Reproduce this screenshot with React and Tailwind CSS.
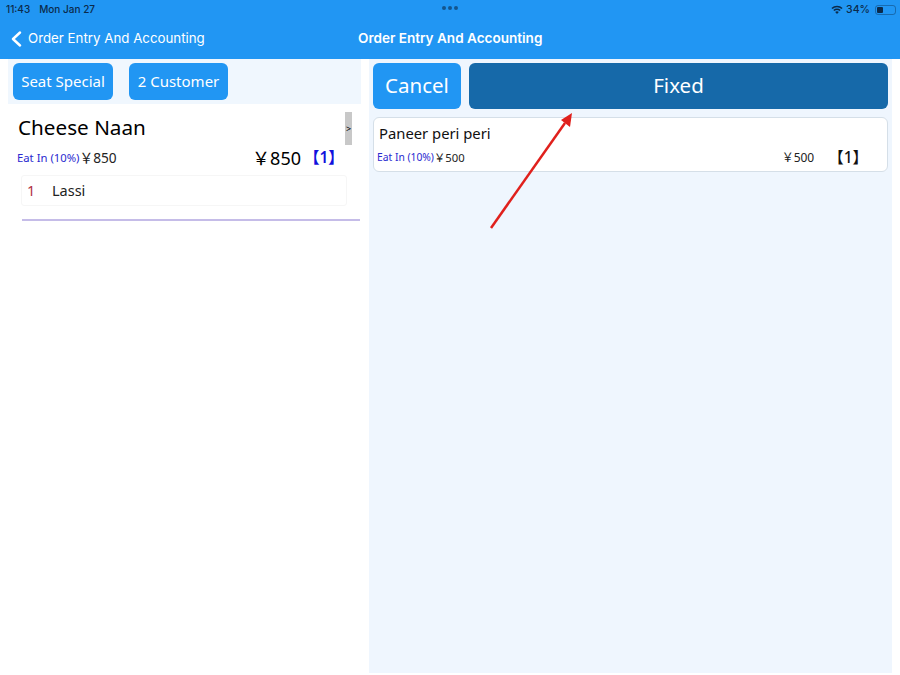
const cjk = "font-['Noto_Sans','Noto_Sans_CJK_JP',sans-serif]";

const Header = () => (
  <header className="relative h-[59px] shrink-0 bg-[#2196f3] font-['Inter',sans-serif]">
    {/* status bar */}
    <div className="flex h-4 items-center justify-between pl-[6px] pr-[4px] pt-[3px] text-[10px] font-medium text-[#0b2a4a]">
      <div className="flex gap-[9px]">
        <span>11:43</span>
        <span>Mon Jan 27</span>
      </div>
      <div className="flex items-center gap-[3px]">
        <svg width="12" height="9" viewBox="0 0 12 9" fill="#0b2a4a">
          <path d="M6 9 4.200 7a2.600 2.600 0 0 1 3.600 0z" />
          <path d="M3.400 6.100 2.300 4.900a5.400 5.400 0 0 1 7.400 0L8.600 6.100a3.800 3.800 0 0 0-5.200 0z" />
          <path d="M1.500 4.100.4 2.900a8.200 8.200 0 0 1 11.200 0l-1.100 1.200a6.600 6.600 0 0 0-9 0z" />
        </svg>
        <span className="text-[10.500px]">34%</span>
        <div className="ml-[2px] flex h-[10px] w-[21px] items-center rounded-[3px] border border-[#0b2a4a]/40 p-[1px]">
          <div className="h-full w-[6px] rounded-[1px] bg-[#0b2a4a]" />
        </div>
      </div>
    </div>
    <div className="absolute left-[442px] top-[6px] flex gap-[2px]">
      <div className="size-[4px] rounded-full bg-[#0b2a4a]/60" />
      <div className="size-[4px] rounded-full bg-[#0b2a4a]/60" />
      <div className="size-[4px] rounded-full bg-[#0b2a4a]/60" />
    </div>
    {/* nav */}
    <div className="flex h-[43px] items-center pt-[2px] text-white">
      <div className="flex w-[358px] items-center pl-[11px]">
        <svg width="11" height="16" viewBox="0 0 11 16" fill="none" stroke="white" strokeWidth="2.400" strokeLinecap="round" strokeLinejoin="round" className="mr-[6px]">
          <path d="M9 1.500 2 8l7 6.500" />
        </svg>
        <span className="text-[13.300px]">Order Entry And Accounting</span>
      </div>
      <span className="text-[13.550px] font-semibold">Order Entry And Accounting</span>
    </div>
  </header>
);

const LeftPanel = () => (
  <section className="w-[369px] shrink-0 bg-white">
    <div className="mx-[8px] flex h-[45px] items-center gap-[16px] bg-[#f0f7fe] pl-[5px]">
      <button className="h-[37px] w-[100px] rounded-[6px] bg-[#2196f3] pb-[1px] text-[15px] text-white">Seat Special</button>
      <button className="h-[37px] w-[99px] rounded-[6px] bg-[#2196f3] pb-[1px] text-[15px] text-white">2 Customer</button>
    </div>
    <div className="relative">
      <div className="pl-[18px] pt-[8px] text-[20.700px] leading-[30px] text-black">Cheese Naan</div>
      <button className="absolute left-[345px] top-[8px] flex h-[33px] w-[7px] items-center justify-center bg-[#c8c8c8] text-[9px] text-black">&gt;</button>
      <div className="mt-[2px] flex h-[28px] items-center pl-[17px]">
        <span className="text-[11.300px] text-[#2a2ad0]">Eat In (10%)</span>
        <span className="text-[13.700px] text-[#222]">￥850</span>
        <span className="ml-auto text-[18px] text-black">￥850</span>
        <span className="ml-[3px] mr-[28px] w-[37px] text-[15.500px] font-semibold text-[#1111dd]">【1】</span>
      </div>
      <div className="ml-[21px] mr-[22px] mt-[3px] flex h-[31px] items-center rounded-[3px] border border-[#f6f6f6] text-[14.500px]">
        <span className="ml-[5px] w-[25px] text-[#b03040]">1</span>
        <span className="text-[#222]">Lassi</span>
      </div>
      <div className="ml-[22px] mr-[9px] mt-[13px] h-[2px] bg-[#c5bce8]" />
    </div>
  </section>
);

const RightPanel = () => (
  <section className="mb-[2px] w-[523px] shrink-0 bg-[#eff6fe] px-[4px]">
    <div className="flex gap-[8px] pt-[4px]">
      <button className="h-[46px] w-[88px] rounded-[6px] bg-[#2196f3] pb-[1px] text-[20.500px] text-white">Cancel</button>
      <button className="h-[46px] flex-1 rounded-[6px] bg-[#1669a9] pb-[1px] text-[20.500px] text-white">Fixed</button>
    </div>
    <div className="mt-[8px] h-[55px] rounded-[6px] border border-[#d5dfe8] bg-white pl-[5px]">
      <div className="pt-[4px] text-[14.800px] leading-[22px] text-[#111]">Paneer peri peri</div>
      <div className="mt-[4px] flex h-[20px] items-center">
        <span className="-ml-[2px] text-[10.300px] text-[#2a2ad0]">Eat In (10%)</span>
        <span className="text-[11.300px] text-[#222]">￥500</span>
        <span className="ml-[317px] text-[12px] text-[#222]">￥500</span>
        <span className="ml-[14px] text-[15.500px] font-medium text-[#111]">【1】</span>
      </div>
    </div>
  </section>
);

export default function App() {
  return (
    <div className={`relative flex h-[675px] w-[900px] flex-col overflow-hidden bg-white ${cjk}`}>
      <Header />
      <main className="flex min-h-0 flex-1">
        <LeftPanel />
        <RightPanel />
      </main>
      {/* annotation arrow */}
      <svg className="absolute left-0 top-0" width="900" height="675" fill="none">
        <line x1="491" y1="228" x2="565" y2="123" stroke="#e0201c" strokeWidth="2.500" />
        <polygon points="572,113 570,127 561,120" fill="#e0201c" />
      </svg>
    </div>
  );
}
